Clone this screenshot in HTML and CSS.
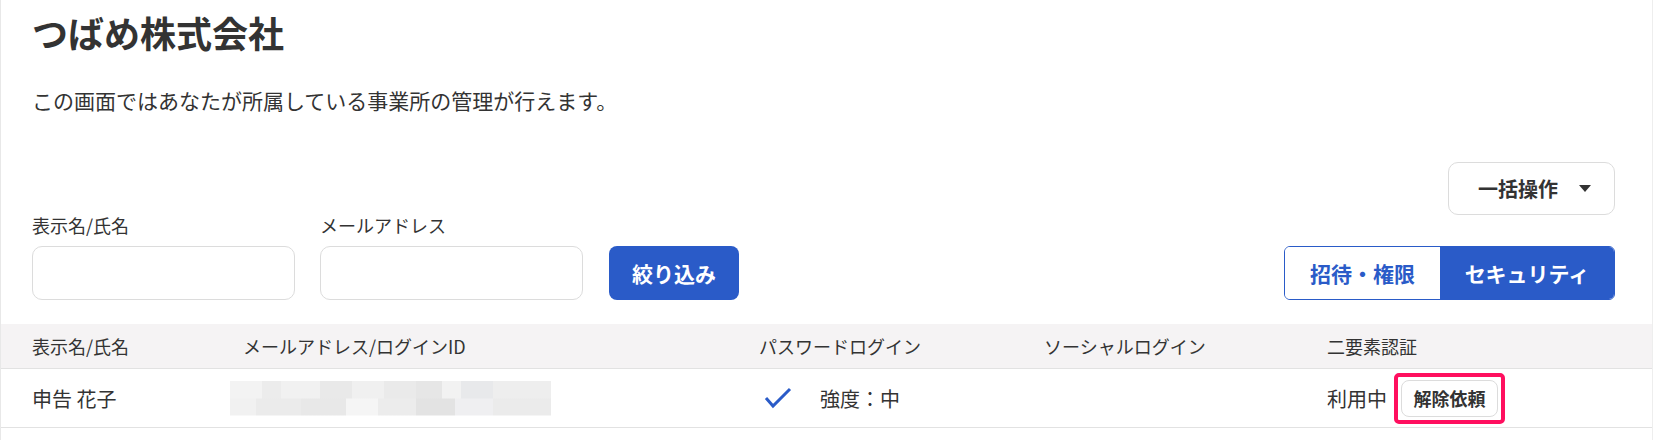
FILE: index.html
```html
<!DOCTYPE html>
<html lang="ja">
<head>
    <meta charset="UTF-8">
    <meta name="viewport" content="width=device-width, initial-scale=1.0">
    <title>つばめ株式会社</title>
    <link rel="stylesheet" href="styles.css">
</head>
<body>

    <div class="page">
        <div class="head">
            <h1>つばめ株式会社</h1>
            <p class="lead">この画面ではあなたが所属している事業所の管理が行えます。</p>

            <!-- Filter + actions -->
            <div class="toolbar">
                <div class="filter">
                    <label class="field">
                        <span class="field-label">表示名/氏名</span>
                        <input type="text" class="field-input">
                    </label>
                    <label class="field">
                        <span class="field-label">メールアドレス</span>
                        <input type="text" class="field-input">
                    </label>
                    <button class="btn-primary">絞り込み</button>
                </div>

                <div class="actions">
                    <button class="btn-menu">一括操作 <span class="caret"></span></button>
                    <div class="segmented">
                        <button class="seg">招待・権限</button>
                        <button class="seg active">セキュリティ</button>
                    </div>
                </div>
            </div>
        </div>

        <!-- Members table -->
        <div class="table">
            <div class="row row-head">
                <div>表示名/氏名</div>
                <div>メールアドレス/ログインID</div>
                <div>パスワードログイン</div>
                <div>ソーシャルログイン</div>
                <div>二要素認証</div>
            </div>
            <div class="row">
                <div>申告 花子</div>
                <div><span class="blurred"></span></div>
                <div class="pw">
                    <svg class="check" width="28" height="22" viewBox="0 0 28 22">
                        <polyline points="2,11 9,19 26,2" fill="none" stroke="#2a5bc8" stroke-width="3"/>
                    </svg>
                    <span>強度：中</span>
                </div>
                <div></div>
                <div class="mfa">
                    <span>利用中</span>
                    <span class="highlight"><button class="btn-small">解除依頼</button></span>
                </div>
            </div>
        </div>
    </div>

</body>
</html>
```

FILE: styles.css
```css
/* base */
body {
    margin: 0;
    font-family: "Noto Sans CJK JP", "Noto Sans", sans-serif;
    color: #333;
    background: #fff;
}

.page {
    margin-right: 1px;
    height: 440px;
    border-left: 1px solid #e8e8e8;
    border-right: 1px solid #eeeeee;
}

.head {
    padding: 7px 37px 0 31px;
}

h1 {
    margin: 0;
    font-size: 36px;
    font-weight: bold;
    line-height: 50px;
}

.lead {
    margin: 28px 0 0 0;
    font-size: 21px;
    line-height: 30px;
}

/* toolbar */
.toolbar {
    display: flex;
    justify-content: space-between;
    align-items: flex-end;
    margin-top: 47px;
}

.filter {
    display: flex;
    align-items: flex-end;
    gap: 25px;
}

.field {
    display: flex;
    flex-direction: column;
}

.field-label {
    font-size: 18px;
    line-height: 26px;
    margin-bottom: 8px;
}

.field-input {
    width: 263px;
    height: 54px;
    box-sizing: border-box;
    border: 1px solid #dcdcdc;
    border-radius: 10px;
    font-size: 18px;
    padding: 0 12px;
    margin: 0;
}

button {
    font-family: inherit;
    cursor: pointer;
    margin: 0;
}

.btn-primary {
    width: 130px;
    height: 54px;
    margin-left: 1px;
    border: none;
    border-radius: 8px;
    background: #2a5bc8;
    color: #fff;
    font-size: 21px;
    font-weight: bold;
}

.actions {
    display: flex;
    flex-direction: column;
    align-items: flex-end;
    gap: 31px;
}

.btn-menu {
    width: 167px;
    height: 53px;
    box-sizing: border-box;
    border: 1px solid #dcdcdc;
    border-radius: 10px;
    background: #fff;
    color: #333;
    font-size: 20px;
    font-weight: bold;
    display: flex;
    align-items: center;
    justify-content: space-between;
    padding: 0 23px 0 29px;
}

.caret {
    width: 0;
    height: 0;
    border-left: 6px solid transparent;
    border-right: 6px solid transparent;
    border-top: 7px solid #333;
}

.segmented {
    display: flex;
    height: 54px;
    border: 1px solid #2a5bc8;
    border-radius: 6px;
    overflow: hidden;
    box-sizing: border-box;
}

.seg {
    border: none;
    background: #fff;
    color: #2a5bc8;
    font-size: 21px;
    font-weight: bold;
    width: 155px;
}

.seg.active {
    width: 174px;
    background: #2a5bc8;
    color: #fff;
}

/* table */
.table {
    margin-top: 24px;
}

.row {
    display: grid;
    grid-template-columns: 211px 516px 285px 283px 1fr;
    align-items: center;
    padding-left: 31px;
    height: 58px;
    font-size: 20px;
    border-bottom: 1px solid #e2e2e2;
}

.row-head {
    height: 44px;
    background: #f5f3f4;
    font-size: 18px;
}

.blurred {
    display: block;
    width: 321px;
    height: 35px;
    margin-left: -13px;
    background:
        linear-gradient(90deg, #f3f3f3 0 10%, #ececec 10% 16%, #f1f1f1 16% 28%, #e9e9e9 28% 38%, #f0f0f0 38% 48%, #eaeaea 48% 58%, #e6e6e6 58% 66%, #f2f2f2 66% 72%, #e8e9eb 72% 82%, #eeeeee 82% 100%) top / 100% 50% no-repeat,
        linear-gradient(90deg, #f1f1f1 0 8%, #ebebeb 8% 22%, #e8e8e8 22% 36%, #f5f5f5 36% 46%, #ececec 46% 58%, #e3e3e3 58% 70%, #efeff1 70% 82%, #ebebeb 82% 100%) bottom / 100% 50% no-repeat;
}

.pw {
    display: flex;
    align-items: center;
    gap: 28px;
}

.check {
    margin-left: 5px;
}

.mfa {
    display: flex;
    align-items: center;
    gap: 7px;
}

.highlight {
    display: inline-flex;
    border: 4px solid #ff0f5f;
    border-radius: 5px;
    padding: 3px;
}

.btn-small {
    width: 97px;
    height: 37px;
    border: 1px solid #dcdcdc;
    border-radius: 8px;
    background: #fff;
    color: #333;
    font-size: 18px;
    font-weight: bold;
}
```
